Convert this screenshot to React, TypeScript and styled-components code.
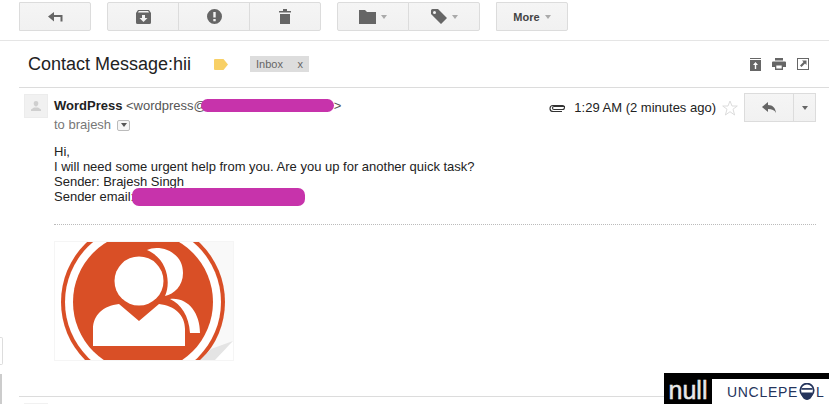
import styled, { createGlobalStyle } from "styled-components";

const GlobalStyle = createGlobalStyle`
  html, body {
    margin: 0;
    background: #fff;
    font-family: "Liberation Sans", Arial, sans-serif;
    overflow: hidden;
  }
`;

const Page = styled.div`
  position: relative;
  width: 829px;
  height: 404px;
  overflow: hidden;
`;

const Toolbar = styled.div`
  display: flex;
  gap: 16px;
  padding: 2px 0 9px 19px;
  border-bottom: 1px solid #e5e5e5;
`;

const ButtonGroup = styled.div`
  display: flex;
`;

const ToolButton = styled.div`
  width: 72px;
  height: 29px;
  box-sizing: border-box;
  display: flex;
  align-items: center;
  justify-content: center;
  gap: 5px;
  background: linear-gradient(#f5f5f5, #f1f1f1);
  border: 1px solid #dcdcdc;
  margin-left: -1px;
  color: #444;
  font-size: 11px;
  font-weight: bold;
  &:first-child {
    margin-left: 0;
    border-radius: 2px 0 0 2px;
  }
  &:last-child {
    border-radius: 0 2px 2px 0;
  }
`;

const Caret = styled.span`
  width: 0;
  height: 0;
  border-left: 3.5px solid transparent;
  border-right: 3.5px solid transparent;
  border-top: 4px solid #aaa;
`;

const SubjectRow = styled.div`
  display: flex;
  align-items: center;
  height: 46px;
  margin-left: 19px;
  padding: 0 20px 0 9px;
  border-bottom: 1px solid #dcdcdc;
`;

const Subject = styled.h1`
  margin: 0;
  font-size: 18px;
  font-weight: normal;
  color: #222;
  width: 186px;
`;

const LabelChip = styled.div`
  display: flex;
  justify-content: space-between;
  align-items: center;
  box-sizing: border-box;
  width: 59px;
  height: 16px;
  margin-left: 22px;
  padding: 0 6px;
  background: #dddddd;
  color: #666;
  font-size: 11px;
`;

const SubjectActions = styled.div`
  display: flex;
  align-items: center;
  gap: 11px;
  margin-left: auto;
`;

const Message = styled.div`
  margin-left: 19px;
  padding: 6px 13px 0 5px;
  display: grid;
  grid-template-columns: 24px 1fr;
  column-gap: 6px;
`;

const Avatar = styled.div`
  width: 24px;
  height: 24px;
  background: #f1f1f1;
  border: 1px solid #ececec;
  box-sizing: border-box;
  display: flex;
  align-items: center;
  justify-content: center;
`;

const HeaderRow = styled.div`
  display: flex;
  justify-content: space-between;
  height: 28px;
`;

const SenderBlock = styled.div`
  font-size: 13px;
  line-height: 15px;
  padding-top: 4px;
  color: #555;
  white-space: nowrap;
`;

const SenderName = styled.b`
  color: #222;
`;

const Redaction = styled.span<{ $width: number; $height: number; $pull: number }>`
  display: inline-block;
  width: ${(p) => p.$width}px;
  height: ${(p) => p.$height}px;
  background: #c733ab;
  border-radius: 7px;
  vertical-align: middle;
  margin: -4px 0 -2px ${(p) => p.$pull}px;
`;

const Recipient = styled.div`
  display: flex;
  align-items: center;
  gap: 6px;
  color: #777;
  font-size: 13px;
  line-height: 14px;
  margin-top: 5px;
`;

const MiniDrop = styled.span`
  width: 13px;
  height: 11px;
  box-sizing: border-box;
  border: 1px solid #bbb;
  border-radius: 2px;
  background: #f5f5f5;
  display: flex;
  align-items: center;
  justify-content: center;
`;

const MiniCaret = styled(Caret)`
  border-top-color: #555;
`;

const MetaBlock = styled.div`
  display: flex;
  align-items: center;
  color: #222;
  font-size: 13px;
  margin-top: -1px;
`;

const MetaTime = styled.span`
  margin: 0 6px 0 8px;
  white-space: nowrap;
`;

const ReplyButton = styled.div`
  display: flex;
  height: 29px;
  margin-left: 6px;
`;

const ReplySegment = styled.div<{ $wide?: boolean }>`
  box-sizing: border-box;
  width: ${(p) => (p.$wide ? 50 : 23)}px;
  display: flex;
  align-items: center;
  justify-content: center;
  background: linear-gradient(#f5f5f5, #f1f1f1);
  border: 1px solid #dcdcdc;
  margin-left: ${(p) => (p.$wide ? 0 : -1)}px;
`;

const DarkCaret = styled(Caret)`
  border-top-color: #666;
`;

const Body = styled.div`
  grid-column: 2;
  margin-top: 22px;
  font-size: 13px;
  line-height: 15px;
  color: #222;
`;

const Signature = styled.div`
  margin-top: 20px;
  border-top: 1px dotted #bbb;
  padding-top: 16px;
`;

const ProfileImage = styled.svg`
  display: block;
  box-sizing: border-box;
  border: 1px solid #f5f5f5;
`;

const NextMessage = styled.div`
  margin: 35px 0 0 19px;
  border-top: 1px solid #dcdcdc;
  padding: 6px 0 0 5px;
`;

const NextAvatar = styled.div`
  width: 24px;
  height: 24px;
  background: #f1f1f1;
`;

const SideButton = styled.div`
  position: absolute;
  left: 0;
  top: 337px;
  width: 3px;
  height: 28px;
  box-sizing: border-box;
  border: 1px solid #ddd;
  border-left: 0;
  border-radius: 0 2px 2px 0;
`;

const SideBar = styled.div`
  position: absolute;
  left: 0;
  top: 374px;
  width: 2px;
  height: 30px;
  background: #cccccc;
`;

const Watermark = styled.div`
  position: absolute;
  right: 0;
  bottom: 0;
  width: 165px;
  height: 31px;
  display: flex;
  background: #000;
`;

const WatermarkNull = styled.div`
  width: 48px;
  color: #e8e8e8;
  font-family: "Liberation Sans", sans-serif;
  font-size: 25px;
  line-height: 34px;
  text-align: center;
  -webkit-text-stroke: 0.5px #e8e8e8;
`;

const WatermarkBrand = styled.div`
  flex: 1;
  margin-top: 6px;
  background: #fff;
  display: flex;
  align-items: center;
  padding-left: 15px;
  color: #24345c;
  font-size: 14px;
  letter-spacing: 0.7px;
`;

const IconColor = "#666666";

const App = () => {
  return (
    <Page>
      <GlobalStyle />
      <Toolbar>
        <ButtonGroup>
          <ToolButton>
            <svg width="15" height="11" viewBox="0 0 15 11">
              <path d="M0 5.5 6 1v3h8.5v6.5h-2V6H6v4.500z" fill={IconColor} />
            </svg>
          </ToolButton>
        </ButtonGroup>
        <ButtonGroup>
          <ToolButton>
            <svg width="15" height="14" viewBox="0 0 15 14">
              <path
                d="M2 0h11l2 3v9.500a1.500 1.500 0 0 1-1.500 1.500h-12A1.500 1.500 0 0 1 0 12.500V3zM2.800 1 2 2.500h11L12.200 1zM6 5v3H3.500l4 4 4-4H9V5z"
                fill={IconColor}
                fillRule="evenodd"
              />
            </svg>
          </ToolButton>
          <ToolButton>
            <svg width="15" height="15" viewBox="0 0 15 15">
              <path
                d="M7.500 0a7.500 7.500 0 1 1 0 15 7.500 7.500 0 0 1 0-15zM6.300 3v5.500h2.400V3zm0 7v2.200h2.400V10z"
                fill={IconColor}
                fillRule="evenodd"
              />
            </svg>
          </ToolButton>
          <ToolButton>
            <svg width="12" height="15" viewBox="0 0 12 15">
              <path d="M0 2h4V0h4v2h4v1.500H0zM1 5h10v10H1z" fill={IconColor} />
            </svg>
          </ToolButton>
        </ButtonGroup>
        <ButtonGroup>
          <ToolButton>
            <svg width="17" height="14" viewBox="0 0 17 14">
              <path d="M0 0h6l2 2h9v12H0z" fill={IconColor} />
            </svg>
            <Caret />
          </ToolButton>
          <ToolButton>
            <svg width="16" height="15" viewBox="0 0 16 15">
              <path
                d="M1.500 0H7l9 9-6 6-9-9-1-1V1.500A1.500 1.500 0 0 1 1.500 0zM3.500 2a1.500 1.500 0 1 0 0 3 1.500 1.500 0 0 0 0-3z"
                fill={IconColor}
                fillRule="evenodd"
              />
            </svg>
            <Caret />
          </ToolButton>
        </ButtonGroup>
        <ButtonGroup>
          <ToolButton>
            More
            <Caret />
          </ToolButton>
        </ButtonGroup>
      </Toolbar>

      <SubjectRow>
        <Subject>Contact Message:hii</Subject>
        <svg width="14" height="11" viewBox="0 0 14 11">
          <path d="M1 0h8.500L14 5.500 9.500 11H1a1 1 0 0 1-1-1V1a1 1 0 0 1 1-1z" fill="#f8d066" />
        </svg>
        <LabelChip>
          <span>Inbox</span>
          <span>x</span>
        </LabelChip>
        <SubjectActions>
          <svg width="11" height="13" viewBox="0 0 11 13">
            <path
              d="M0 0h11v1H0zM0 2h11v11H0zM5.500 4 3 7h1.800v4h1.400V7H8z"
              fill={IconColor}
              fillRule="evenodd"
            />
          </svg>
          <svg width="14" height="12" viewBox="0 0 14 12">
            <path
              d="M3 0h8v2.500H3zM1 3.500h12a1 1 0 0 1 1 1V9h-3v3H3V9H0V4.500a1 1 0 0 1 1-1zM4.300 7.500v3h5.400v-3z"
              fill={IconColor}
              fillRule="evenodd"
            />
          </svg>
          <svg width="12" height="12" viewBox="0 0 12 12">
            <path
              d="M0 0h12v12H0zM1 1v10h10V1zM5 2.500h4.500V7L8 5.500 4.500 9 3 7.500 6.500 4z"
              fill={IconColor}
              fillRule="evenodd"
            />
          </svg>
        </SubjectActions>
      </SubjectRow>

      <Message>
        <Avatar>
          <svg width="10" height="10" viewBox="0 0 10 10">
            <path d="M5 0a2.300 2.300 0 0 1 2.300 2.500C7.300 4 6.300 5.500 5 5.500S2.700 4 2.700 2.500A2.300 2.300 0 0 1 5 0zM0 8.500 3 6.500h4l3 2V10H0z" fill="#cfcfcf" />
          </svg>
        </Avatar>
        <HeaderRow>
          <SenderBlock>
            <SenderName>WordPress</SenderName> &lt;wordpress@
            <Redaction $width={133} $height={13} $pull={-6} />
            &gt;
            <Recipient>
              to brajesh
              <MiniDrop>
                <MiniCaret />
              </MiniDrop>
            </Recipient>
          </SenderBlock>
          <MetaBlock>
            <svg width="17" height="9" viewBox="0 0 17 9">
              <path
                d="M16 3.500H5a1.500 1.500 0 0 0 0 3h8.500a2 2 0 0 0 0-4H4a3 3 0 0 0 0 6h9"
                fill="none"
                stroke="#333"
                strokeWidth="1.100"
              />
            </svg>
            <MetaTime>1:29 AM (2 minutes ago)</MetaTime>
            <svg width="16" height="16" viewBox="0 0 16 16">
              <path
                d="m8 1 2 5h5.300l-4.300 3.200L12.600 15 8 11.700 3.400 15 5 9.200.7 6H6z"
                fill="#fff"
                stroke="#dcdcdc"
              />
            </svg>
            <ReplyButton>
              <ReplySegment $wide>
                <svg width="14" height="11" viewBox="0 0 14 11">
                  <path d="M0 5 6 0v3c5 0 7.500 3 8 8-1.500-3-4-4-8-4v3z" fill={IconColor} />
                </svg>
              </ReplySegment>
              <ReplySegment>
                <DarkCaret />
              </ReplySegment>
            </ReplyButton>
          </MetaBlock>
        </HeaderRow>
        <Body>
          Hi,
          <br />
          I will need some urgent help from you. Are you up for another quick task?
          <br />
          Sender: Brajesh Singh
          <br />
          Sender email:
          <Redaction $width={173} $height={18} $pull={-2} />
          <Signature>
            <ProfileImage width="180" height="120" viewBox="1 1 178 118">
              <path d="M125 0h55v100l-30 20H125z" fill="#f9f9f9" />
              <circle cx="89" cy="61" r="82" fill="#d94f26" />
              <circle cx="89" cy="61" r="78" fill="#fff" />
              <circle cx="89" cy="61" r="70" fill="#d94f26" />
              <circle cx="85" cy="40" r="24.500" fill="#fff" />
              <path d="M39 105V88c0-14 10-23 26-25l20 17 20-17c16 2 26 11 26 25v17z" fill="#fff" />
              <path d="M93 9c12-6 36 1 36 23 0 13-9 21-18 23 6-13 3-37-18-46z" fill="#fff" />
              <path d="M116 58c18-2 30 14 30 34h-10c-1-17-9-29-20-34z" fill="#fff" />
              <path d="M179 100 150 120h29z" fill="#fff" />
              <path d="M179 100l-22 8-12 12h15c6-6 13-14 19-20z" fill="#e4e4e4" />
            </ProfileImage>
          </Signature>
        </Body>
      </Message>

      <NextMessage>
        <NextAvatar />
      </NextMessage>

      <SideButton />
      <SideBar />

      <Watermark>
        <WatermarkNull>null</WatermarkNull>
        <WatermarkBrand>
          UNCLEPE
          <svg width="18" height="18" viewBox="0 0 16 16">
            <circle cx="8" cy="6.500" r="6" fill="none" stroke="#24345c" strokeWidth="1.500" />
            <path d="M3 4.500h10V6H3z" fill="#24345c" />
            <path d="M3 8.500h10c0 4-2 6.500-5 6.500s-5-2.500-5-6.500z" fill="#24345c" />
          </svg>
          L
        </WatermarkBrand>
      </Watermark>
    </Page>
  );
};

export default App;
